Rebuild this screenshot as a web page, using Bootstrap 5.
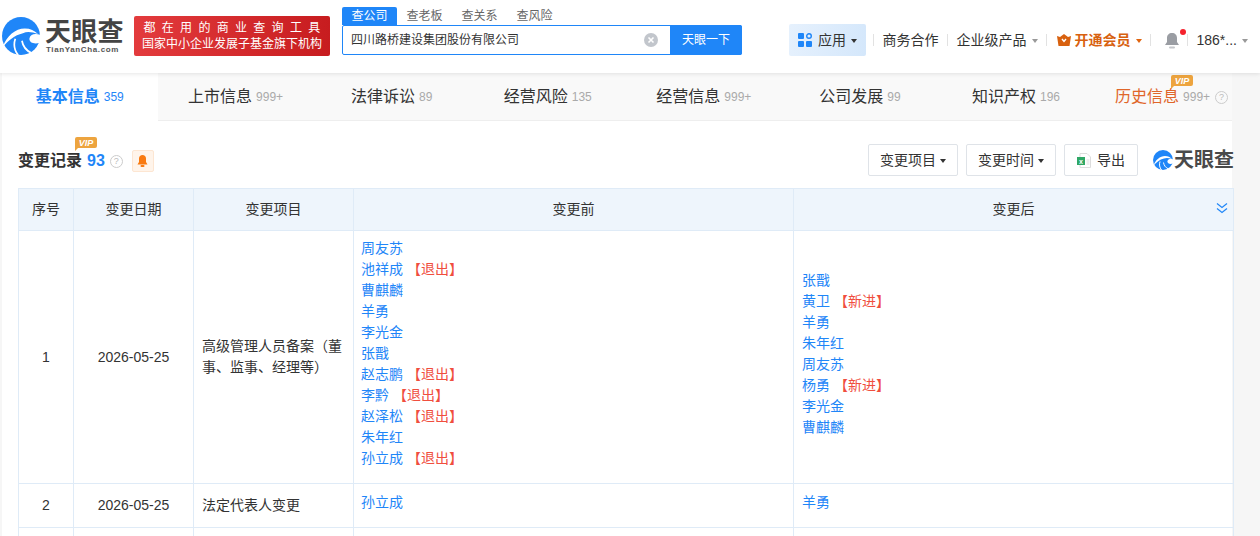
<!DOCTYPE html>
<html lang="zh">
<head>
<meta charset="utf-8">
<title>天眼查</title>
<link href="https://cdn.jsdelivr.net/npm/bootstrap@5.3.0/dist/css/bootstrap.min.css" rel="stylesheet">
<style>
body { background: #f6f6f6; font-family: "Liberation Sans", "Noto Sans CJK SC", sans-serif; font-size: 14px; color: #333; overflow: hidden; }
a { text-decoration: none; }
.top-bar { height: 73px; background: #fff; box-shadow: 0 1px 4px rgba(0,0,0,.1); position: relative; z-index: 2; padding-left: 2px; }
.brand-block { width: 80px; margin-left: 5px; }
.brand-name { font-size: 26px; font-weight: 700; line-height: 26px; color: #444; letter-spacing: .3px; }
.brand-site { font-size: 8px; font-weight: 700; color: #555; letter-spacing: .62px; line-height: 9px; white-space: nowrap; margin-left: 1px; }
.promo { width: 196px; height: 40px; margin-left: 9px; background: linear-gradient(90deg, #e33b3d, #c71c1f); color: #fff; border-radius: 2px; font-size: 12px; line-height: 16px; padding: 4px 8px; text-align: center; }
.promo-spaced { letter-spacing: 6.3px; margin-right: -6px; }
.search-wrap { width: 400px; margin-left: 12px; margin-top: 7px; }
.search-tab { font-size: 12px; line-height: 18px; padding: 0 9.5px; color: #666; }
.search-tab.on { background: #1f86f8; color: #fff; border-radius: 2px 2px 0 0; }
.search-box { height: 30px; border: 1px solid #1f86f8; border-radius: 2px; background: #fff; }
.search-text { font-size: 12px; color: #333; padding-left: 8px; }
.clear-ico { margin-right: 12px; }
.search-btn { width: 72px; margin-right: -1px; background: #1f86f8; color: #fff; font-size: 12px; line-height: 30px; text-align: center; border-radius: 0 2px 2px 0; }
.nav-side { margin-left: 47px; height: 32px; margin-top: 24px; }
.app-btn { height: 32px; width: 77px; background: linear-gradient(100deg, #e6f1fd, #d4e7fb); border-radius: 2px; color: #333; font-size: 14px; padding-left: 9px; gap: 6px; white-space: nowrap; }
.nav-sep { width: 1px; height: 12px; background: #e2e2e2; flex: none; }
.nav-sep-first { margin-left: 7px; }
.nav-item-own { font-size: 14px; color: #333; white-space: nowrap; margin: 0 8.5px; }
.tri { display: inline-block; border: 3.5px solid transparent; border-top: 4px solid #999; border-bottom: 0; vertical-align: 2px; margin-left: 5px; }
.tri-dark { border-top-color: #333; }
.tri-vip { border-top-color: #e0640f; }
.vip-link { color: #d8610f; font-weight: 700; margin-left: 9.5px; }
.bell-wrap { margin: 0 7px 0 13px; }
.dot-red { position: absolute; width: 6px; height: 6px; border-radius: 50%; background: #f5222d; top: -3px; right: -6px; }
.page-wrap { width: 1230px; margin-left: 2px; background: #fff; }
.tab-strip { height: 48px; background: #f9f9f9; border-bottom: 1px solid #eee; }
.tab-own { width: 156.1px; flex: none; height: 48px; font-size: 16px; color: #333; white-space: nowrap; position: relative; }
.tab-own.on { width: 155.5px; background: #fff; color: #1f86f8; font-weight: 700; }
.tab-count { font-size: 12px; color: #aaa; margin-left: 4px; font-weight: 400; }
.tab-own.on .tab-count { color: #1f86f8; }
.tab-hist { width: 136px; color: #e0662a; padding-left: 21px; justify-content: flex-start !important; }
.help-ico { display: inline-flex; width: 13px; height: 13px; border: 1px solid #ccc; border-radius: 50%; color: #bbb; font-size: 9px; line-height: 11px; align-items: center; justify-content: center; margin-left: 5px; font-weight: 400; }
.vip-tag { position: absolute; width: 24px; height: 14px; }
.sect-head { padding: 25px 0 12px 16px; height: 67px; }
.sect-title { font-size: 16px; font-weight: 700; color: #333; position: relative; line-height: 22px; }
.sect-count { color: #1f86f8; margin-left: 5px; }
.bell-box { width: 22px; height: 22px; margin-left: 9px; background: #fff4ea; border: 1px solid #fde6d2; border-radius: 2px; }
.tool-group { margin-top: -2px; margin-right: -2px; }
.tool-btn { height: 32px; border: 1px solid #dfe3e8; border-radius: 2px; background: #fff; color: #333; font-size: 14px; padding: 0; white-space: nowrap; }
.brand-small-wrap { margin-left: 7px; gap: 1px; }
.brand-small { font-size: 20px; font-weight: 700; line-height: 22px; color: #4a4a4a; }
.tbl-wrap { padding: 0 0 0 16px; }
.change-tbl { table-layout: fixed; width: 1215px; margin: 0; border-color: #dfebf7; font-size: 14px; color: #333; }
.change-tbl th { background: #eef5fc; height: 42px; font-weight: 400; text-align: center; vertical-align: middle; padding: 0; position: relative; }
.change-tbl td { padding: 7px 8px; line-height: 21px; vertical-align: middle; }
.change-tbl td.names-cell { padding-bottom: 14px; }
.change-tbl td.names-before { padding-left: 7px; }
.num-cell { text-align: center; }
.person { color: #1f86f8; display: block; }
.out-tag { color: #f04e3e; }
.expand-ico { position: absolute; right: 5px; top: 13px; }
</style>
</head>
<body>
<header class="top-bar d-flex">
  <div class="d-flex align-items-center" style="height:72px">
    <svg width="38" height="38" viewBox="0 0 40 40"><circle cx="20" cy="20" r="20" fill="#1f86f8"/><path d="M1 31C5 20 14 12 24 12 30 12 34 14 38 18 32 16 27 15 22 17 13 19 7 25 1 31Z" fill="#fff"/><path d="M41 19C35 17 30 18 29 22 28 27 33 29 41 27Z" fill="#fff"/><path d="M14 23C12 29 13 35 17 40M21 25C22 31 25 35 31 38" stroke="#fff" stroke-width="1.800" fill="none"/></svg>
    <div class="brand-block">
      <div class="brand-name">天眼查</div>
      <div class="brand-site">TianYanCha.com</div>
    </div>
    <div class="promo">
      <div class="promo-spaced">都在用的商业查询工具</div>
      <div>国家中小企业发展子基金旗下机构</div>
    </div>
  </div>
  <div class="search-wrap">
    <div class="d-flex">
      <span class="search-tab on">查公司</span><span class="search-tab">查老板</span><span class="search-tab">查关系</span><span class="search-tab">查风险</span>
    </div>
    <div class="search-box d-flex align-items-center">
      <span class="search-text flex-grow-1">四川路桥建设集团股份有限公司</span>
      <svg class="clear-ico" width="14" height="14" viewBox="0 0 14 14"><circle cx="7" cy="7" r="7" fill="#c2c6cc"/><path d="M4.500 4.500l5 5M9.500 4.500l-5 5" stroke="#fff" stroke-width="1.600"/></svg>
      <span class="search-btn">天眼一下</span>
    </div>
  </div>
  <div class="nav-side d-flex align-items-center">
    <div class="app-btn d-flex align-items-center">
      <svg width="14" height="14" viewBox="0 0 14 14" fill="#1f86f8"><rect width="6" height="6" rx="1"/><circle cx="11" cy="3" r="2.300" fill="none" stroke="#1f86f8" stroke-width="1.400"/><rect y="8" width="6" height="6" rx="1"/><rect x="8" y="8" width="6" height="6" rx="1"/></svg>
      <span>应用<i class="tri tri-dark"></i></span>
    </div>
    <span class="nav-sep nav-sep-first"></span>
    <span class="nav-item-own">商务合作</span>
    <span class="nav-sep"></span>
    <span class="nav-item-own">企业级产品<i class="tri"></i></span>
    <span class="nav-sep"></span>
    <span class="nav-item-own vip-link d-flex align-items-center gap-1">
      <svg width="14" height="12" viewBox="0 0 14 12"><path d="M0 2l3 1 4-3 4 3 3-1-1.500 10h-11z" fill="#d8610f"/><path d="M5 5l2 2.500 2-2.500" stroke="#fff" stroke-width="1.400" fill="none"/></svg>
      <span>开通会员<i class="tri tri-vip"></i></span>
    </span>
    <span class="nav-sep"></span>
    <span class="position-relative bell-wrap d-flex">
      <svg width="16" height="17" viewBox="0 0 16 17"><path d="M8 1c3 0 5 2 5 5v4l2 3H1l2-3V6c0-3 2-5 5-5z" fill="#9a9da3"/><rect x="5" y="14.500" width="6" height="2" rx="1" fill="#c4c6ca"/></svg>
      <span class="dot-red"></span>
    </span>
    <span class="nav-sep"></span>
    <span class="nav-item-own">186*...<i class="tri"></i></span>
  </div>
</header>
<main class="page-wrap">
  <div class="tab-strip d-flex">
    <div class="tab-own on d-flex align-items-center justify-content-center">基本信息<span class="tab-count">359</span></div>
    <div class="tab-own d-flex align-items-center justify-content-center">上市信息<span class="tab-count">999+</span></div>
    <div class="tab-own d-flex align-items-center justify-content-center">法律诉讼<span class="tab-count">89</span></div>
    <div class="tab-own d-flex align-items-center justify-content-center">经营风险<span class="tab-count">135</span></div>
    <div class="tab-own d-flex align-items-center justify-content-center">经营信息<span class="tab-count">999+</span></div>
    <div class="tab-own d-flex align-items-center justify-content-center">公司发展<span class="tab-count">99</span></div>
    <div class="tab-own d-flex align-items-center justify-content-center">知识产权<span class="tab-count">196</span></div>
    <div class="tab-own tab-hist d-flex align-items-center justify-content-center">历史信息<span class="tab-count">999+</span><span class="help-ico">?</span>
      <svg class="vip-tag" style="left:75px;top:2px" viewBox="0 0 24 14"><path d="M2 0h20q2 0 2 2v7q0 2-2 2H5l-3 3V2q0-2 2-2z" fill="#eda43f"/><text x="13" y="9" font-size="9" font-weight="700" font-style="italic" fill="#fff" text-anchor="middle" font-family="Liberation Sans">VIP</text></svg>
    </div>
  </div>
  <div class="sect-head d-flex align-items-start">
    <div class="sect-title d-flex align-items-center pt-1">变更记录<span class="sect-count">93</span><span class="help-ico">?</span>
      <svg class="vip-tag" style="left:55px;top:-9px" viewBox="0 0 24 14"><path d="M2 0h20q2 0 2 2v7q0 2-2 2H5l-3 3V2q0-2 2-2z" fill="#eda43f"/><text x="13" y="9" font-size="9" font-weight="700" font-style="italic" fill="#fff" text-anchor="middle" font-family="Liberation Sans">VIP</text></svg>
      <span class="bell-box d-flex align-items-center justify-content-center"><svg width="11" height="12" viewBox="0 0 11 12"><path d="M5.500 0c2 0 3.500 1.500 3.500 3.500V7l1.500 2.500H.5L2 7V3.500C2 1.500 3.500 0 5.500 0z" fill="#f97a10"/><rect x="3.500" y="10" width="4" height="2" rx="1" fill="#f97a10"/></svg></span>
    </div>
    <div class="ms-auto d-flex gap-2 align-items-center tool-group">
      <button class="tool-btn" style="width:90px">变更项目<i class="tri tri-dark ms-1"></i></button>
      <button class="tool-btn" style="width:90px">变更时间<i class="tri tri-dark ms-1"></i></button>
      <button class="tool-btn d-flex align-items-center justify-content-center" style="width:74px;gap:6px">
        <svg width="14" height="15" viewBox="0 0 14 15"><path d="M3 .5h7l3.500 3.500v10.500H3z" fill="#fff" stroke="#ddd"/><path d="M9.500 7h3M9.500 9h3M9.500 11h3" stroke="#ddd"/><rect y="4" width="8" height="8" fill="#2fa866"/><text x="4" y="10.500" font-size="7" font-weight="700" fill="#fff" text-anchor="middle" font-family="Liberation Sans">x</text></svg>导出</button>
      <div class="d-flex align-items-center brand-small-wrap">
        <svg width="20" height="20" viewBox="0 0 40 40"><circle cx="20" cy="20" r="20" fill="#1f86f8"/><path d="M1 31C5 20 14 12 24 12 30 12 34 14 38 18 32 16 27 15 22 17 13 19 7 25 1 31Z" fill="#fff"/><path d="M41 19C35 17 30 18 29 22 28 27 33 29 41 27Z" fill="#fff"/><path d="M14 23C12 29 13 35 17 40M21 25C22 31 25 35 31 38" stroke="#fff" stroke-width="2" fill="none"/></svg>
        <span class="brand-small">天眼查</span>
      </div>
    </div>
  </div>
  <div class="tbl-wrap">
    <table class="table table-bordered change-tbl">
      <colgroup><col style="width:55px"><col style="width:120px"><col style="width:160px"><col style="width:440px"><col style="width:440px"></colgroup>
      <thead><tr><th>序号</th><th>变更日期</th><th>变更项目</th><th>变更前</th><th>变更后
        <svg class="expand-ico" width="12" height="12" viewBox="0 0 12 12" fill="none" stroke="#1f86f8" stroke-width="1.200"><path d="M1 1.500l5 4 5-4M1 6.500l5 4 5-4"/></svg></th></tr></thead>
      <tbody>
        <tr>
          <td class="num-cell">1</td><td class="num-cell">2026-05-25</td>
          <td>高级管理人员备案（董事、监事、经理等）</td>
          <td class="names-cell names-before">
            <a class="person" href="#">周友苏</a>
            <a class="person" href="#">池祥成 <span class="out-tag">【退出】</span></a>
            <a class="person" href="#">曹麒麟</a>
            <a class="person" href="#">羊勇</a>
            <a class="person" href="#">李光金</a>
            <a class="person" href="#">张戬</a>
            <a class="person" href="#">赵志鹏 <span class="out-tag">【退出】</span></a>
            <a class="person" href="#">李黔 <span class="out-tag">【退出】</span></a>
            <a class="person" href="#">赵泽松 <span class="out-tag">【退出】</span></a>
            <a class="person" href="#">朱年红</a>
            <a class="person" href="#">孙立成 <span class="out-tag">【退出】</span></a>
          </td>
          <td class="names-cell">
            <a class="person" href="#">张戬</a>
            <a class="person" href="#">黄卫 <span class="out-tag">【新进】</span></a>
            <a class="person" href="#">羊勇</a>
            <a class="person" href="#">朱年红</a>
            <a class="person" href="#">周友苏</a>
            <a class="person" href="#">杨勇 <span class="out-tag">【新进】</span></a>
            <a class="person" href="#">李光金</a>
            <a class="person" href="#">曹麒麟</a>
          </td>
        </tr>
        <tr style="height:44px">
          <td class="num-cell">2</td><td class="num-cell">2026-05-25</td>
          <td>法定代表人变更</td>
          <td class="names-cell names-before"><a class="person" href="#">孙立成</a></td>
          <td class="names-cell"><a class="person" href="#">羊勇</a></td>
        </tr>
        <tr style="height:44px"><td></td><td></td><td></td><td></td><td></td></tr>
      </tbody>
    </table>
  </div>
</main>
<script src="https://cdn.jsdelivr.net/npm/bootstrap@5.3.0/dist/js/bootstrap.bundle.min.js"></script>
</body>
</html>
